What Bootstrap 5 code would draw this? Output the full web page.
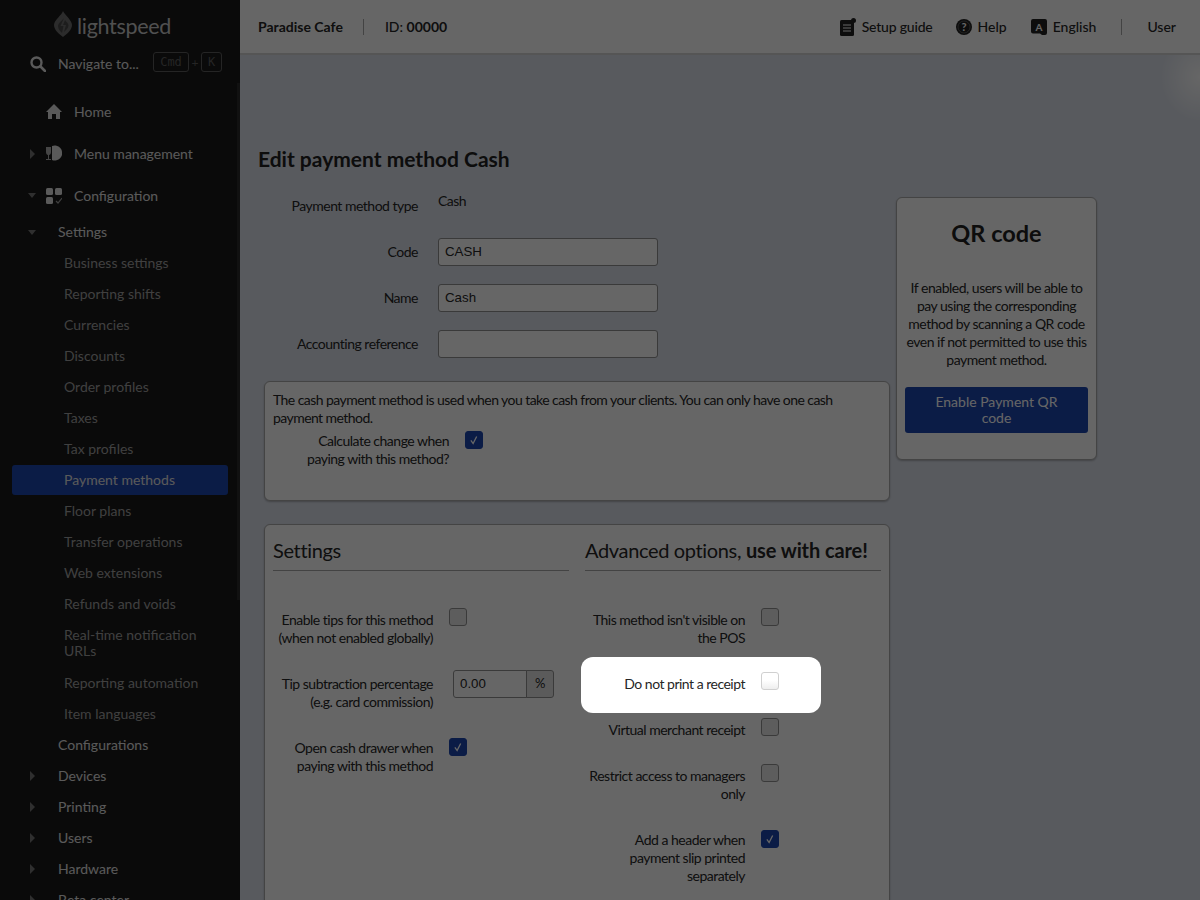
<!DOCTYPE html>
<html lang="en">
<head>
<meta charset="utf-8">
<title>Edit payment method Cash</title>
<link rel="stylesheet" href="https://cdn.jsdelivr.net/npm/bootstrap@5.3.0/dist/css/bootstrap.min.css">
<style>
html,body{height:900px;overflow:hidden}
body{font-family:Lato,"Liberation Sans",sans-serif;font-size:14px;line-height:18px;color:#262626;background:#dce1eb}
.side-panel{width:240px;height:900px;flex:none;background:#191919;color:#e0e0e0;position:relative}
.side-scroll{position:absolute;left:237px;top:83px;width:3px;height:517px;background:#2c2c2c}
.logo-row{height:42px;padding:11px 0 0 54px;gap:5px}
.logo-word{font-size:21.500px;font-weight:400;line-height:30px;color:#c8c8c8;letter-spacing:-.3px}
.search-row{height:40px;padding-left:30px;margin-top:2px}
.search-text{margin-left:12px;width:95px;white-space:nowrap;color:#e0e0e0}
.key-cap{font-family:"DejaVu Sans Mono","Liberation Mono",monospace;font-size:12px;line-height:18px;height:20px;border:1px solid #5e5e5e;border-radius:3px;color:#5e5e5e;text-align:center;margin-top:-4px;width:36px}
.key-k{width:21px}
.key-plus{color:#5e5e5e;font-size:12px;width:12px;text-align:center;margin-top:-2px}
.nav-zone{margin-top:7px}
.top-item{height:42px;position:relative;padding-left:74px;font-size:14px;display:flex;align-items:center}
.sub-item{height:31px;position:relative;padding-left:58px;display:flex;align-items:center}
.sub-item.first-sub{padding-bottom:2px}
.leaf-item{height:30px;margin-bottom:1px;padding-left:52px;margin-left:12px;margin-right:12px;display:flex;align-items:center;color:#a0a0a0;border-radius:3px}
.leaf-item.two-line{height:47px;line-height:16px;padding-right:20px;padding-bottom:2px}
.leaf-item.on{background:#1c46b0;color:#e0e0e0}
.sub-after{margin-top:-1px}
.caret-r,.caret-d{position:absolute;width:0;height:0}
.caret-r{left:30px;top:50%;margin-top:-5px;border-left:5px solid #777;border-top:5px solid transparent;border-bottom:5px solid transparent}
.caret-d{left:28px;top:50%;margin-top:-3px;border-top:5px solid #777;border-left:4px solid transparent;border-right:4px solid transparent}
.nav-ico{position:absolute;left:46px;top:50%;margin-top:-9px}
.main-col{width:960px;flex:none}
.top-bar{height:55px;background:#fff;border-bottom:2px solid #d4d4d4;padding:0 24px 0 18px;font-weight:500}
.top-sep{width:1px;height:16px;background:#a8a8a8}
.top-bar .top-link{display:flex;align-items:center;gap:6px;white-space:nowrap}
.top-bar .setup-link{letter-spacing:-.2px}
.top-bar .help-link{margin-left:23px}
.top-bar .lang-link{margin-left:24px}
.sep-brand{margin:0 21px 0 20px}
.sep-user{margin:0 25px}
.content-zone{padding:92px 0 0 18px;background:radial-gradient(ellipse 40px 45px at 100% 22px,#fff,rgba(255,255,255,0))}
.page-title{font-size:21px;line-height:24px;font-weight:700;margin:0 0 21px;color:#222}
.left-pane{width:632px;flex:none}
.tight-copy{letter-spacing:-.5px}
.field-row{height:28px;margin-bottom:18px;display:flex;gap:20px}
.field-label{width:160px;flex:none;text-align:right;align-self:center;margin:0}
.field-input.form-control{width:220px;height:28px;padding:0 6px 2px;font-family:"Liberation Sans",Arial,sans-serif;font-size:13.300px;letter-spacing:0;border:1px solid #929292;border-radius:3px;color:#262626;box-shadow:none}
.panel-box{margin-left:6px;width:626px;background:#fff;border:1px solid #aaa;border-radius:6px;padding:9px 8px;box-shadow:0 1px 2px rgba(0,0,0,.25)}
.info-panel{height:120px;margin-top:23px;margin-bottom:23px}
.info-lead{letter-spacing:-.56px}
.info-opts{padding-left:16px;margin-top:2px}
.opt-row{display:flex;align-items:flex-start;gap:16px;margin-bottom:25px}
.opt-label{width:160px;flex:none;text-align:right;padding-top:3px;margin:0}
.opt-check.form-check-input{width:18px;height:18px;margin:0;flex:none;border:1px solid #929292;border-radius:3px;background-color:#e8e8e8;box-shadow:none}
.opt-check.form-check-input:checked{background-color:#1c46b0;border-color:#1c46b0;margin-top:2px;--bs-form-check-bg-image:url("data:image/svg+xml,%3csvg xmlns='http://www.w3.org/2000/svg' viewBox='0 0 18 18'%3e%3cpath fill='none' stroke='%23fff' stroke-width='1.5' d='M5.500 9.500l2.500 3.500 4-8'/%3e%3c/svg%3e");background-size:100% 100%}
.opt-row.spot{position:relative;z-index:10;margin-bottom:25px}
.opt-row.spot::before{content:"";position:absolute;left:-4px;top:-15px;width:240px;height:56px;background:#fff;border-radius:12px;box-shadow:0 0 0 3000px rgba(0,0,0,.6);z-index:-1}
.spot .opt-check.form-check-input{background:linear-gradient(#fff 45%,#eee);border-color:#d0d0d0}
.settings-panel{height:600px}
.pane-col{width:296px}
.pane-head{font-size:20px;line-height:24px;font-weight:400;margin:4px 0 37px;padding-bottom:8px;border-bottom:1px solid #a8a8a8;color:#262626;white-space:nowrap;letter-spacing:-.35px}
.pane-head b{font-weight:700;letter-spacing:-.1px}
.pct-group{width:101px;margin-left:4px;margin-top:-2px;flex:none}
.pct-group .form-control{height:28px;padding:0 6px 2px;font-family:"Liberation Sans",Arial,sans-serif;font-size:13.300px;letter-spacing:0;border:1px solid #929292;border-radius:3px 0 0 3px;color:#262626;box-shadow:none}
.pct-group .input-group-text{width:28px;height:28px;padding:0;justify-content:center;font-size:13px;background:#e4e4e4;border:1px solid #929292;border-radius:0 3px 3px 0;color:#262626}
.qr-box{width:201px;height:263px;margin:5px 0 0 6px;background:#fff;border:1px solid #aaa;border-radius:6px;padding:0 8px;text-align:center;box-shadow:0 1px 2px rgba(0,0,0,.25)}
.qr-title{font-size:23.500px;line-height:30px;font-weight:700;margin:20px 0 31px;color:#222;letter-spacing:0}
.qr-text{margin:0 -2px 18px}
.qr-btn.btn{display:block;width:183px;height:46px;padding:7px 20px;font-size:14px;line-height:16px;background:#1c46b0;border:0;border-radius:3px;color:#fff;letter-spacing:0}
</style>
</head>
<body class="d-flex">

<aside class="side-panel">
  <div class="side-scroll"></div>
  <div class="logo-row d-flex align-items-start">
    <svg width="18" height="26" viewBox="0 0 18 26"><path d="M9 0 C10 3 18 9 18 14 C18 19 13 23 9 26 C5 23 0 19 0 14 C0 9 8 4 9 0Z" fill="#6e6e6e"/><path d="M10 7 C8 10 4 12 4 15 C4 18 6 20 8 22 L9.500 15 L6.500 15Z" fill="#4a4a4a"/><path d="M11 9 L9 14 L12 14 L10 21 C12 19 14.500 17 14.500 14.500 C14.500 12.500 12.500 11 11 9Z" fill="#4a4a4a"/></svg>
    <span class="logo-word">lightspeed</span>
  </div>
  <div class="search-row d-flex align-items-center">
    <svg width="16" height="16" viewBox="0 0 16 16"><circle cx="6.500" cy="6.500" r="5" fill="none" stroke="#e0e0e0" stroke-width="2.400"/><path d="M10.500 10.500 L15 15" stroke="#e0e0e0" stroke-width="2.600" stroke-linecap="round"/></svg>
    <span class="search-text">Navigate to...</span>
    <span class="key-cap">Cmd</span><span class="key-plus">+</span><span class="key-cap key-k">K</span>
  </div>
  <nav class="nav-zone">
    <div class="top-item">
      <svg class="nav-ico" width="16" height="18" viewBox="0 0 16 18"><path d="M8 1 L0 9 L2 9 L2 16 L6 16 L6 11 L10 11 L10 16 L14 16 L14 9 L16 9Z" fill="#e0e0e0"/></svg>Home</div>
    <div class="top-item"><span class="caret-r"></span>
      <svg class="nav-ico" width="16" height="18" viewBox="0 0 16 18"><path d="M0 2 H5 V7 C5 9 4 10 3 10 V14 H5 V15 H0 V14 H2 V10 C1 10 0 9 0 7Z" fill="#b0b0b0"/><path d="M6 1 A7.500 7.500 0 1 1 6 15Z" fill="#e0e0e0"/></svg>Menu management</div>
    <div class="top-item"><span class="caret-d"></span>
      <svg class="nav-ico" width="16" height="18" viewBox="0 0 16 18"><rect x="0" y="1" width="7" height="7" rx="1.500" fill="#e0e0e0"/><rect x="9" y="1" width="7" height="7" rx="1.500" fill="#e0e0e0"/><rect x="0" y="10" width="7" height="7" rx="1.500" fill="#e0e0e0"/><path d="M10 14 L12 16 L16 11" fill="none" stroke="#a0a0a0" stroke-width="1.200"/></svg>Configuration</div>
    <div class="sub-item first-sub"><span class="caret-d"></span>Settings</div>
    <div class="leaf-item">Business settings</div>
    <div class="leaf-item">Reporting shifts</div>
    <div class="leaf-item">Currencies</div>
    <div class="leaf-item">Discounts</div>
    <div class="leaf-item">Order profiles</div>
    <div class="leaf-item">Taxes</div>
    <div class="leaf-item">Tax profiles</div>
    <div class="leaf-item on">Payment methods</div>
    <div class="leaf-item">Floor plans</div>
    <div class="leaf-item">Transfer operations</div>
    <div class="leaf-item">Web extensions</div>
    <div class="leaf-item">Refunds and voids</div>
    <div class="leaf-item two-line">Real-time notification URLs</div>
    <div class="leaf-item">Reporting automation</div>
    <div class="leaf-item">Item languages</div>
    <div class="sub-item sub-after">Configurations</div>
    <div class="sub-item"><span class="caret-r"></span>Devices</div>
    <div class="sub-item"><span class="caret-r"></span>Printing</div>
    <div class="sub-item"><span class="caret-r"></span>Users</div>
    <div class="sub-item"><span class="caret-r"></span>Hardware</div>
    <div class="sub-item"><span class="caret-r"></span>Beta center</div>
  </nav>
</aside>

<div class="main-col">
  <header class="top-bar d-flex align-items-center">
    <strong class="fw-bold">Paradise Cafe</strong>
    <span class="top-sep sep-brand"></span>
    <span>ID: <b>00000</b></span>
    <div class="ms-auto d-flex align-items-center">
      <span class="top-link setup-link">
        <svg width="16" height="18" viewBox="0 0 16 18"><rect x="0" y="2" width="14" height="16" rx="1.500" fill="#222"/><circle cx="13.500" cy="2.500" r="2.500" fill="#222"/><path d="M3 7H11M3 10H11M3 13H11" stroke="#fff" stroke-width="1.200"/></svg>Setup guide</span>
      <span class="top-link help-link">
        <svg width="16" height="16" viewBox="0 0 16 16"><circle cx="8" cy="8" r="8" fill="#222"/><circle cx="8" cy="8" r="6" fill="none" stroke="#777" stroke-width=".6"/><text x="8" y="11.800" text-anchor="middle" font-size="11" font-weight="700" font-family="Lato" fill="#fff">?</text></svg>Help</span>
      <span class="top-link lang-link">
        <svg width="16" height="16" viewBox="0 0 16 16"><path d="M2 0H14a2 2 0 0 1 2 2V14a2 2 0 0 1-2 2H11L9 14.500 H2a2 2 0 0 1-2-2V2a2 2 0 0 1 2-2Z" fill="#222"/><text x="8" y="11.500" text-anchor="middle" font-size="10" font-weight="700" font-family="Lato" fill="#fff">A</text></svg>English</span>
      <span class="top-sep sep-user"></span>
      <span>User</span>
    </div>
  </header>

  <main class="content-zone">
    <h1 class="page-title">Edit payment method Cash</h1>
    <div class="d-flex align-items-start">
      <div class="left-pane tight-copy">
        <div class="field-row">
          <label class="field-label">Payment method type</label>
          <span>Cash</span>
        </div>
        <div class="field-row">
          <label class="field-label" for="f-code">Code</label>
          <input id="f-code" class="form-control field-input" value="CASH">
        </div>
        <div class="field-row">
          <label class="field-label" for="f-name">Name</label>
          <input id="f-name" class="form-control field-input" value="Cash">
        </div>
        <div class="field-row">
          <label class="field-label" for="f-acc">Accounting reference</label>
          <input id="f-acc" class="form-control field-input" value="">
        </div>

        <section class="panel-box info-panel">
          <div class="info-lead">The cash payment method is used when you take cash from your clients. You can only have one cash payment method.</div>
          <div class="opt-row info-opts">
            <label class="opt-label">Calculate change when paying with this method?</label>
            <input class="form-check-input opt-check" type="checkbox" checked>
          </div>
        </section>

        <section class="panel-box settings-panel d-flex justify-content-between">
          <div class="pane-col">
            <h2 class="pane-head">Settings</h2>
            <div class="opt-row">
              <label class="opt-label">Enable tips for this method (when not enabled globally)</label>
              <input class="form-check-input opt-check" type="checkbox">
            </div>
            <div class="opt-row">
              <label class="opt-label">Tip subtraction percentage (e.g. card commission)</label>
              <div class="input-group pct-group flex-nowrap">
                <input class="form-control" value="0.00">
                <span class="input-group-text">%</span>
              </div>
            </div>
            <div class="opt-row">
              <label class="opt-label">Open cash drawer when paying with this method</label>
              <input class="form-check-input opt-check" type="checkbox" checked>
            </div>
          </div>
          <div class="pane-col">
            <h2 class="pane-head">Advanced options, <b>use with care!</b></h2>
            <div class="opt-row">
              <label class="opt-label">This method isn't visible on the POS</label>
              <input class="form-check-input opt-check" type="checkbox">
            </div>
            <div class="opt-row spot">
              <label class="opt-label">Do not print a receipt</label>
              <input class="form-check-input opt-check" type="checkbox">
            </div>
            <div class="opt-row">
              <label class="opt-label">Virtual merchant receipt</label>
              <input class="form-check-input opt-check" type="checkbox">
            </div>
            <div class="opt-row">
              <label class="opt-label">Restrict access to managers only</label>
              <input class="form-check-input opt-check" type="checkbox">
            </div>
            <div class="opt-row">
              <label class="opt-label">Add a header when payment slip printed separately</label>
              <input class="form-check-input opt-check" type="checkbox" checked>
            </div>
          </div>
        </section>
      </div>

      <aside class="qr-box tight-copy">
        <h2 class="qr-title">QR code</h2>
        <p class="qr-text">If enabled, users will be able to pay using the corresponding method by scanning a QR code even if not permitted to use this payment method.</p>
        <button type="button" class="btn btn-primary qr-btn">Enable Payment QR code</button>
      </aside>
    </div>
  </main>
</div>

<script src="https://cdn.jsdelivr.net/npm/bootstrap@5.3.0/dist/js/bootstrap.bundle.min.js"></script>
</body>
</html>
